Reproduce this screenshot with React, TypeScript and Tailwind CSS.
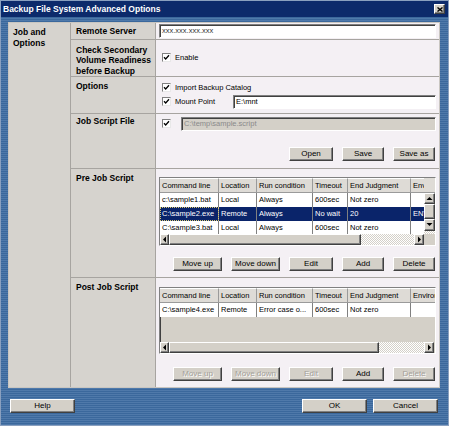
import React from 'react';

const raised =
  'bg-[#d4d0c8] border border-t-white border-l-white border-r-[#404040] border-b-[#404040] shadow-[inset_-1px_-1px_#808080]';
const sunken =
  'border border-t-[#808080] border-l-[#808080] border-r-white border-b-white shadow-[inset_1px_1px_#404040]';
const checker =
  'bg-[repeating-conic-gradient(#d4d0c8_0_25%,#ffffff_0_50%)] bg-[length:2px_2px]';

const colW = ['w-[59px]', 'w-[38px]', 'w-[56px]', 'w-[35px]', 'w-[63px]', 'w-[60px]'];
const headers = ['Command line', 'Location', 'Run condition', 'Timeout', 'End Judgment', 'Environment'];

const PRE_ROWS = [
  ['c:\\sample1.bat', 'Local', 'Always', '600sec', 'Not zero', ''],
  ['C:\\sample2.exe', 'Remote', 'Always', 'No wait', '20', 'ENV_MODE=1'],
  ['C:\\sample3.bat', 'Local', 'Always', '600sec', 'Not zero', ''],
];
const POST_ROWS = [['C:\\sample4.exe', 'Remote', 'Error case o...', '600sec', 'Not zero', '']];

const Check = () => (
  <span className="w-[9px] h-[9px] shrink-0 bg-white border border-t-[#808080] border-l-[#808080] border-r-[#e8e8e8] border-b-[#e8e8e8] flex items-center justify-center">
    <svg width="7" height="7" viewBox="0 0 7 7">
      <path d="M1 3.2 L2.7 5 L6 1.3" stroke="#000" strokeWidth="1.3" fill="none" />
    </svg>
  </span>
);

const Arrow = ({ dir }: { dir: 'up' | 'down' | 'left' | 'right' }) => {
  const pts = {
    up: '0.5,4 3.5,1 6.5,4',
    down: '0.5,1 3.5,4 6.5,1',
    left: '4,0.5 1,3.5 4,6.5',
    right: '1,0.5 4,3.5 1,6.5',
  }[dir];
  const vert = dir === 'up' || dir === 'down';
  return (
    <svg width={vert ? 7 : 5} height={vert ? 5 : 7} viewBox={vert ? '0 0 7 5' : '0 0 5 7'}>
      <polygon points={pts} fill="#000" />
    </svg>
  );
};

const Btn = ({ label, w, disabled }: { label: string; w: string; disabled?: boolean }) => (
  <button
    className={`${raised} ${w} h-[14px] flex items-center justify-center text-[8px] leading-none ${
      disabled ? 'text-[#a39f99] [text-shadow:1px_1px_#ffffff]' : 'text-black'
    }`}
  >
    {label}
  </button>
);

const JobTable = ({ rows, vscroll, thumb }: { rows: string[][]; vscroll?: boolean; thumb: string }) => (
  <div className={`${sunken} flex flex-col bg-[#d4d0c8] ${vscroll ? 'h-[69px]' : 'h-[67px]'}`}>
    <div className="flex flex-1 min-h-0">
      <div className="flex-1 min-w-0 overflow-hidden flex flex-col">
        <div className="flex h-[15px] shrink-0">
          {headers.map((h, i) => (
            <div
              key={h}
              className={`${colW[i]} shrink-0 bg-[#dedbd6] border-r border-b border-[#9a9a9a] border-t border-t-white pl-[2px] text-[7.5px] leading-[13px] whitespace-nowrap overflow-hidden`}
            >
              {h}
            </div>
          ))}
        </div>
        {rows.map((r, ri) => {
          const sel = ri === 1 && vscroll;
          return (
            <div key={ri} className={`flex h-[14px] shrink-0 ${sel ? 'bg-[#0a246a] text-white' : 'bg-white'}`}>
              {r.map((c, ci) => (
                <div
                  key={ci}
                  className={`${colW[ci]} shrink-0 border-r border-[#808080] pl-[2px] text-[7.5px] leading-[13px] whitespace-nowrap overflow-hidden ${
                    sel && ci === 0 ? 'outline outline-1 outline-dotted outline-[#d8c870] -outline-offset-1' : ''
                  }`}
                >
                  {c}
                </div>
              ))}
            </div>
          );
        })}
      </div>
      {vscroll && (
        <div className="w-[11px] shrink-0 flex flex-col">
          <div className="h-[15px] bg-[#dedbd6] border-b border-[#9a9a9a]" />
          <div className={`${raised} h-[11px] flex items-center justify-center`}>
            <Arrow dir="up" />
          </div>
          <div className={`${raised} h-[15px]`} />
          <div className={`${raised} h-[12px] flex items-center justify-center`}>
            <Arrow dir="down" />
          </div>
          <div className={`flex-1 ${checker}`} />
        </div>
      )}
    </div>
    <div className="h-[11px] shrink-0 flex">
      <div className={`${raised} w-[9px] flex items-center justify-center`}>
        <Arrow dir="left" />
      </div>
      <div className={`${raised} ${thumb}`} />
      <div className={`flex-1 ${checker}`} />
      <div className={`${raised} w-[10px] flex items-center justify-center`}>
        <Arrow dir="right" />
      </div>
      {vscroll ? <div className="w-[11px] bg-[#d4d0c8]" /> : <div className="w-[1px] bg-[#d4d0c8]" />}
    </div>
  </div>
);

const Row = ({
  label,
  h,
  children,
  pt,
  last,
}: {
  label: React.ReactNode;
  h: string;
  children: React.ReactNode;
  pt: string;
  last?: boolean;
}) => (
  <div className={`flex ${h} ${last ? '' : 'border-b border-[#a7a4a0]'}`}>
    <div className={`w-[85px] shrink-0 bg-[#d6d3ce] border-r border-[#a7a4a0] pl-[5px] ${pt} font-bold text-[8.5px] leading-[10.5px]`}>
      {label}
    </div>
    <div className="flex-1 min-w-0 bg-[#f4f0f4]">{children}</div>
  </div>
);

export default function App() {
  return (
    <div className="w-[449px] h-[426px] flex flex-col font-['Liberation_Sans',Arial,sans-serif] text-black bg-[repeating-linear-gradient(to_bottom,#3b689c_0,#3b689c_1px,#4f79aa_1px,#4f79aa_2px)] border border-[#8aa0bf]">
      {/* title bar */}
      <div className="h-[16px] shrink-0 bg-[#0c2a6b] flex items-center justify-between pl-[2px] pr-[3px]">
        <span className="text-white font-bold text-[8.5px] leading-none">Backup File System Advanced Options</span>
        <span className={`${raised} w-[11px] h-[10px] flex items-center justify-center`}>
          <svg width="6" height="5" viewBox="0 0 6 5">
            <path d="M0.5 0.5 L5.5 4.5 M5.5 0.5 L0.5 4.5" stroke="#000" strokeWidth="1.4" />
          </svg>
        </span>
      </div>

      <div className="flex-1 flex flex-col pt-[5px] pl-[7px] pr-[8px]">
        <div className="h-[366px] flex border border-[#c9c6c1]">
          <div className="w-[62px] shrink-0 bg-[#d6d3ce] border-r border-[#a7a4a0] pl-[4px] pt-[4px] font-bold text-[8.5px] leading-[11px]">
            Job and
            <br />
            Options
          </div>
          <div className="flex-1 min-w-0 flex flex-col">
            <Row label="Remote Server" h="h-[17px]" pt="pt-[3px]">
              <div className="pt-[1px] pl-[3px] pr-[3px]">
                <div className={`${sunken} h-[14px] bg-white pl-[2px] text-[7.5px] leading-[12px] text-[#333]`}>
                  xxx.xxx.xxx.xxx
                </div>
              </div>
            </Row>
            <Row
              label={
                <>
                  Check Secondary
                  <br />
                  Volume Readiness
                  <br />
                  before Backup
                </>
              }
              h="h-[37px]"
              pt="pt-[5px]"
            >
              <div className="h-full flex items-center gap-[4px] pl-[6px] text-[7.5px]">
                <Check />
                <span>Enable</span>
              </div>
            </Row>
            <Row label="Options" h="h-[37px]" pt="pt-[4px]">
              <div className="flex flex-col pt-[4px] pl-[6px] pr-[3px] text-[7.5px]">
                <div className="h-[14px] flex items-center gap-[4px]">
                  <Check />
                  <span>Import Backup Catalog</span>
                </div>
                <div className="h-[14px] flex items-center gap-[4px]">
                  <Check />
                  <span className="w-[54px]">Mount Point</span>
                  <div className={`${sunken} flex-1 h-[14px] bg-white pl-[2px] leading-[12px]`}>E:\mnt</div>
                </div>
              </div>
            </Row>
            <Row label="Job Script File" h="h-[55px]" pt="pt-[2px]">
              <div className="flex flex-col pt-[3px] pl-[6px] pr-[3px]">
                <div className="h-[14px] flex items-center gap-[10px]">
                  <Check />
                  <div className={`${sunken} flex-1 h-[14px] bg-[#d4d0c8] pl-[2px] text-[7.5px] leading-[12px] text-[#8a8a8a]`}>
                    C:\temp\sample.script
                  </div>
                </div>
                <div className="flex justify-end gap-[9px] mt-[16px] pr-[1px]">
                  <Btn label="Open" w="w-[44px]" />
                  <Btn label="Save" w="w-[42px]" />
                  <Btn label="Save as" w="w-[42px]" />
                </div>
              </div>
            </Row>
            <Row label="Pre Job Script" h="h-[110px]" pt="pt-[4px]">
              <div className="flex flex-col pt-[8px] pl-[3px] pr-[3px]">
                <JobTable rows={PRE_ROWS} vscroll thumb="w-[192px]" />
                <div className="flex justify-end gap-[9px] mt-[11px] pr-[1px]">
                  <Btn label="Move up" w="w-[49px]" />
                  <Btn label="Move down" w="w-[49px]" />
                  <Btn label="Edit" w="w-[44px]" />
                  <Btn label="Add" w="w-[42px]" />
                  <Btn label="Delete" w="w-[42px]" />
                </div>
              </div>
            </Row>
            <Row label="Post Job Script" h="h-[109px]" pt="pt-[4px]" last>
              <div className="flex flex-col pt-[9px] pl-[3px] pr-[3px]">
                <JobTable rows={POST_ROWS} thumb="w-[210px]" />
                <div className="flex justify-end gap-[9px] mt-[13px] pr-[1px]">
                  <Btn label="Move up" w="w-[49px]" disabled />
                  <Btn label="Move down" w="w-[49px]" disabled />
                  <Btn label="Edit" w="w-[44px]" disabled />
                  <Btn label="Add" w="w-[42px]" />
                  <Btn label="Delete" w="w-[42px]" disabled />
                </div>
              </div>
            </Row>
          </div>
        </div>

        <div className="flex items-center mt-[11px] pl-[2px] pr-[2px]">
          <Btn label="Help" w="w-[65px]" />
          <div className="flex-1" />
          <div className="flex gap-[6px]">
            <Btn label="OK" w="w-[65px]" />
            <Btn label="Cancel" w="w-[65px]" />
          </div>
        </div>
      </div>
    </div>
  );
}
